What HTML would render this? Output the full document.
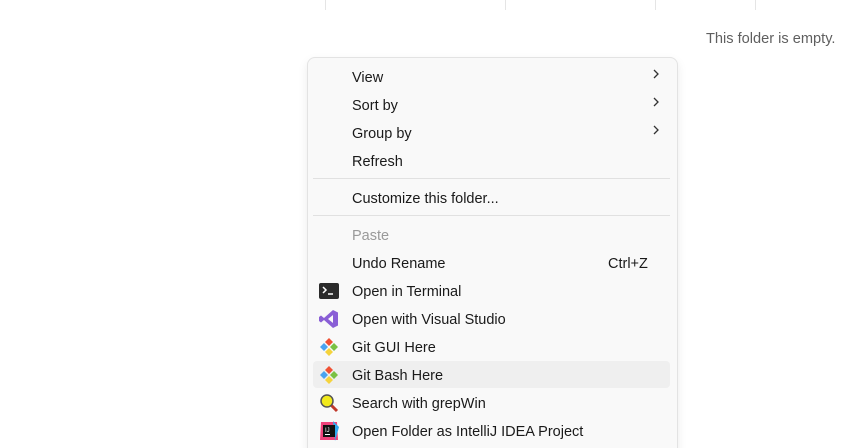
<!DOCTYPE html>
<html style="overflow:hidden;height:448px"><head><style>
body{margin:0;width:855px;height:448px;background:#fff;position:relative;overflow:hidden;font-family:"Liberation Sans",sans-serif;}
.vl{position:absolute;top:0;height:10px;width:1px;background:#e5e5e5}
.empty{position:absolute;left:706px;top:31px;font-size:14.6px;color:#5f5f5f}
.menu{position:absolute;left:307px;top:57px;width:369px;height:400px;background:#f9f9f9;border:1px solid #e3e3e3;border-radius:8px;box-shadow:0 4px 10px rgba(0,0,0,.08)}
.it{position:absolute;left:352px;font-size:14.5px;color:#1a1a1a;line-height:20px;transform:translateY(-8px)}
.dis{color:#9a9a9a}
.arr{position:absolute;left:652px;width:8px;height:10px;transform:translateY(-6px)}
.sep{position:absolute;left:313px;width:357px;height:1px;background:#e1e1e1}
.hl{position:absolute;left:313px;top:361px;width:357px;height:27px;background:#efefef;border-radius:4px}
.ic{position:absolute;left:319px;width:20px;height:20px;transform:translateY(-9px)}
</style></head><body>
<div class="vl" style="left:325px"></div><div class="vl" style="left:505px"></div><div class="vl" style="left:655px"></div><div class="vl" style="left:755px"></div>
<div class="empty">This folder is empty.</div>
<div class="menu"></div>
<div class="hl"></div>
<div class="it" style="top:76px">View</div><svg class="arr" style="top:75px" viewBox="0 0 8 10"><path d="M2 1l4 4-4 4" stroke="#333" stroke-width="1.3" fill="none"/></svg>
<div class="it" style="top:104px">Sort by</div><svg class="arr" style="top:103px" viewBox="0 0 8 10"><path d="M2 1l4 4-4 4" stroke="#333" stroke-width="1.3" fill="none"/></svg>
<div class="it" style="top:132px">Group by</div><svg class="arr" style="top:131px" viewBox="0 0 8 10"><path d="M2 1l4 4-4 4" stroke="#333" stroke-width="1.3" fill="none"/></svg>
<div class="it" style="top:160px">Refresh</div>
<div class="sep" style="top:178px"></div>
<div class="it" style="top:197px">Customize this folder...</div>
<div class="sep" style="top:215px"></div>
<div class="it dis" style="top:234px">Paste</div>
<div class="it" style="top:262px">Undo Rename</div><div class="it" style="top:262px;left:608px">Ctrl+Z</div>
<div class="it" style="top:290px">Open in Terminal</div>
<div class="it" style="top:318px">Open with Visual Studio</div>
<div class="it" style="top:346px">Git GUI Here</div>
<div class="it" style="top:374px">Git Bash Here</div>
<div class="it" style="top:402px">Search with grepWin</div>
<div class="it" style="top:430px">Open Folder as IntelliJ IDEA Project</div>
<svg class="ic" style="top:290px" viewBox="0 0 20 20"><rect x="0" y="2" width="20" height="16" rx="2" fill="#2b2b2b"/><path d="M4 6l3 3-3 3" stroke="#fff" stroke-width="1.5" fill="none"/><path d="M9 13h5" stroke="#fff" stroke-width="1.5"/></svg>
<svg class="ic" style="top:318px" viewBox="0 0 20 20"><path d="M14 1l5 2.5v13L14 19 5 11l-3 2.5L0 12V8l2-1.5L5 9l9-8zM14 6l-5 4 5 4z" fill="#8a5fd6"/></svg>
<svg class="ic" style="top:346px" viewBox="0 0 20 20"><path d="M10 1l4 4-4 4-4-4z" fill="#f05033"/><path d="M1 10l4-4 4 4-4 4z" fill="#4aa3f0"/><path d="M19 10l-4-4-4 4 4 4z" fill="#7ac143"/><path d="M10 19l4-4-4-4-4 4z" fill="#f5d33d"/></svg>
<svg class="ic" style="top:374px" viewBox="0 0 20 20"><path d="M10 1l4 4-4 4-4-4z" fill="#f05033"/><path d="M1 10l4-4 4 4-4 4z" fill="#4aa3f0"/><path d="M19 10l-4-4-4 4 4 4z" fill="#7ac143"/><path d="M10 19l4-4-4-4-4 4z" fill="#f5d33d"/></svg>
<svg class="ic" style="top:402px" viewBox="0 0 20 20"><path d="M12 12l6 6" stroke="#c0392b" stroke-width="3"/><circle cx="8" cy="8" r="6" fill="#f2ea1c" stroke="#555" stroke-width="1.5"/></svg>
<svg class="ic" style="top:430px" viewBox="0 0 20 20"><path d="M2 1h16l1 18H1z" fill="#f0427a"/><path d="M14 0l6 6-4 14z" fill="#2ea9f0"/><rect x="4" y="4" width="12" height="12" fill="#111"/><text x="6" y="11" font-size="6" fill="#fff" font-family="Liberation Sans">IJ</text><rect x="6" y="13" width="5" height="1" fill="#fff"/></svg>
</body></html>
